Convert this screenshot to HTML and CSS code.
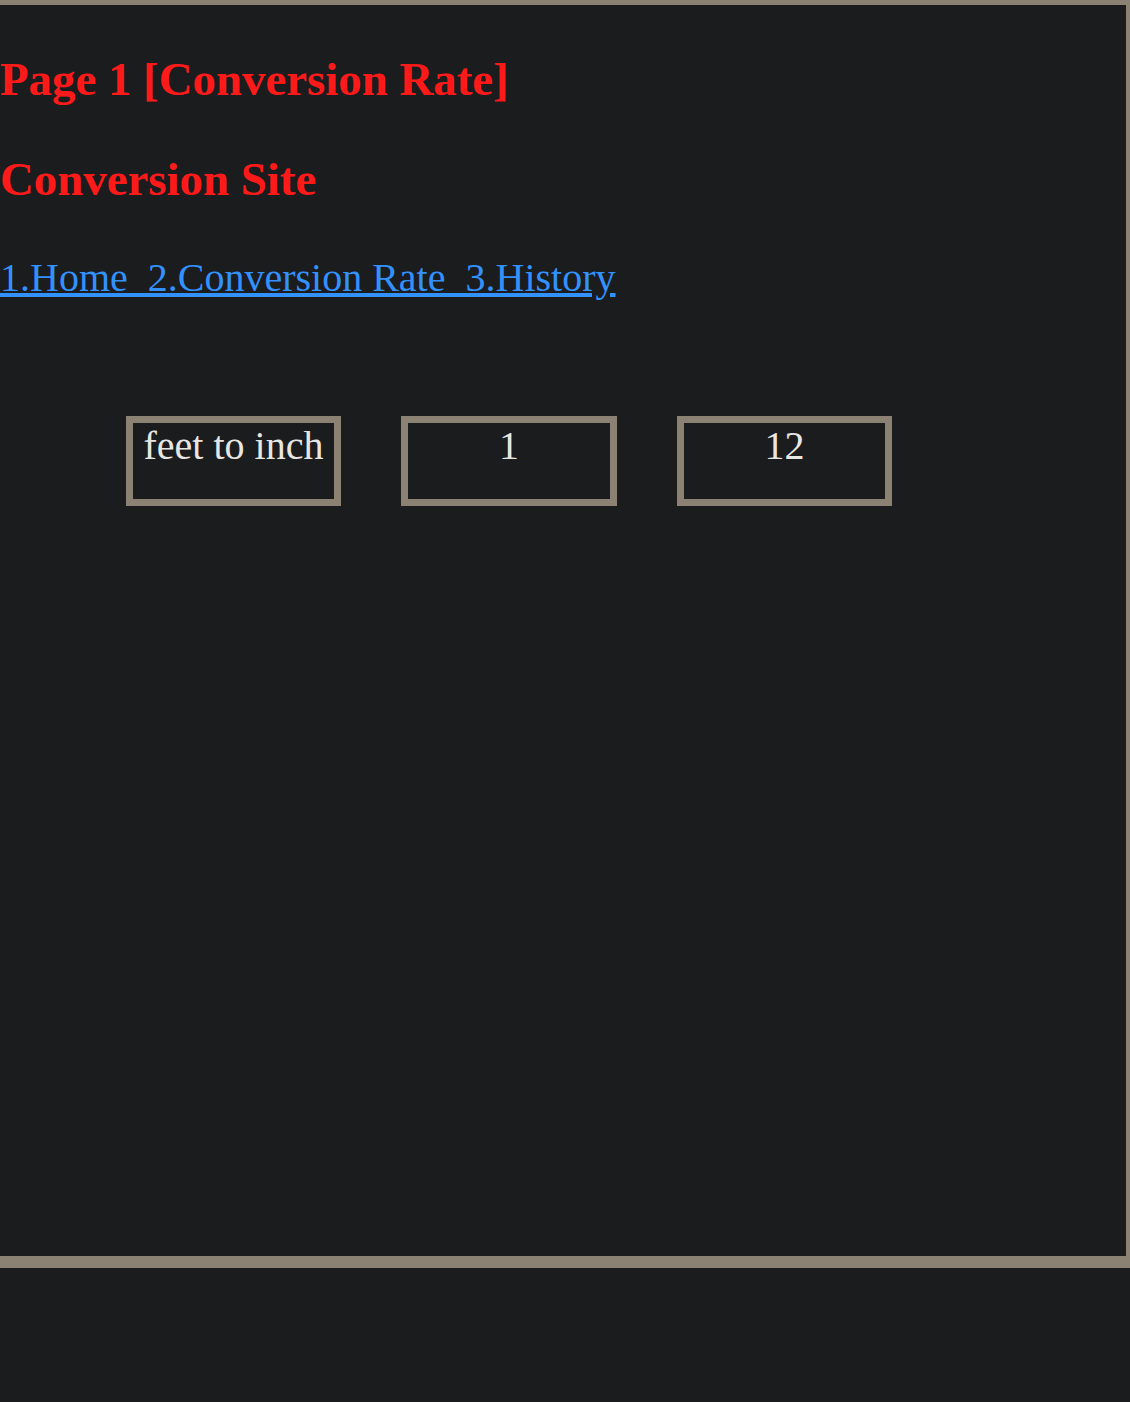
FILE: index.html
```html
<!DOCTYPE html>
<html>
<head>
<meta charset="utf-8">
<title>Conversion Rate</title>
<link rel="stylesheet" href="styles.css">
</head>
<body>
<div class="frame">
  <h1 class="title">Page 1 [Conversion Rate]</h1>
  <h1 class="title">Conversion Site</h1>
  <nav class="nav"><a href="#">1.Home&nbsp;&nbsp;2.Conversion Rate&nbsp;&nbsp;3.History</a></nav>
  <div class="boxes">
    <div class="box">feet to inch</div>
    <div class="box box-wide">1</div>
    <div class="box">12</div>
  </div>
</div>
</body>
</html>
```

FILE: styles.css
```css
html, body {
  margin: 0;
  padding: 0;
  background: #1b1c1e;
}

body {
  font-family: "Liberation Serif", "Times New Roman", serif;
  color: #e8e6e3;
}

.frame {
  box-sizing: border-box;
  height: 1268px;
  border-style: solid;
  border-color: #8c8273;
  border-width: 5px 4px 12px 0;
  padding-top: 47px;
}

.title {
  font-size: 46.85px;
  font-weight: bold;
  color: #ff1a1a;
  margin: 0 0 46px 0;
  line-height: 54px;
}

.nav {
  font-size: 40px;
  line-height: 46px;
  margin-top: 49px;
}

.nav a {
  color: #3391ff;
  text-decoration: underline;
}

.boxes {
  display: flex;
  gap: 60px;
  padding-left: 126px;
  margin-top: 115px;
}

.box {
  box-sizing: border-box;
  width: 215px;
  height: 90px;
  border: 7px solid #8c8273;
  text-align: center;
  font-size: 40px;
  line-height: 46px;
  color: #e8e6e3;
}

.box-wide {
  width: 216px;
}
```
